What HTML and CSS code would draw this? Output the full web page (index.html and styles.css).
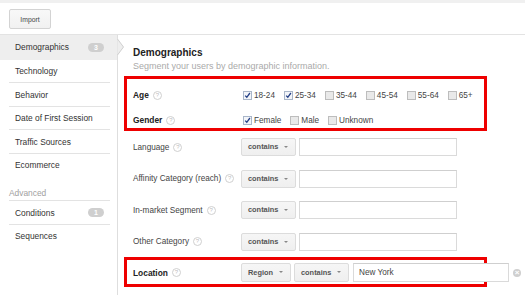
FILE: index.html
```html
<!DOCTYPE html>
<html lang="en">
<head>
    <meta charset="UTF-8">
    <meta name="viewport" content="width=device-width, initial-scale=1.0">
    <title>Segment Builder</title>
    <link rel="stylesheet" href="styles.css">
</head>
<body>
    <div class="top">
        <button type="button" class="btn-import">Import</button>
    </div>
    <div class="layout">
        <nav class="sidebar">
            <div class="nav-item active">
                <div class="nav-inner">Demographics <span class="badge">3</span></div>
                <svg class="nav-arrow" width="7" height="16" viewBox="0 0 7 16"><path d="M0.5 0 L6.5 8 L0.5 16" fill="#eeeeee" stroke="#cfcfcf" stroke-width="1"/></svg>
            </div>
            <div class="nav-item"><div class="nav-inner">Technology</div></div>
            <div class="nav-item"><div class="nav-inner">Behavior</div></div>
            <div class="nav-item"><div class="nav-inner">Date of First Session</div></div>
            <div class="nav-item"><div class="nav-inner">Traffic Sources</div></div>
            <div class="nav-item last"><div class="nav-inner">Ecommerce</div></div>
            <div class="nav-group">Advanced</div>
            <div class="nav-item"><div class="nav-inner">Conditions <span class="badge">1</span></div></div>
            <div class="nav-item last"><div class="nav-inner">Sequences</div></div>
        </nav>

        <main class="content">
            <h1>Demographics</h1>
            <p class="sub">Segment your users by demographic information.</p>

            <div class="highlight">
                <div class="row">
                    <div class="label strong">Age <span class="help">?</span></div>
                    <div class="checks">
                        <label class="check"><span class="cb on"></span>18-24</label>
                        <label class="check"><span class="cb on"></span>25-34</label>
                        <label class="check"><span class="cb"></span>35-44</label>
                        <label class="check"><span class="cb"></span>45-54</label>
                        <label class="check"><span class="cb"></span>55-64</label>
                        <label class="check"><span class="cb"></span>65+</label>
                    </div>
                </div>
                <div class="row">
                    <div class="label strong">Gender <span class="help">?</span></div>
                    <div class="checks">
                        <label class="check"><span class="cb on"></span>Female</label>
                        <label class="check"><span class="cb"></span>Male</label>
                        <label class="check"><span class="cb"></span>Unknown</label>
                    </div>
                </div>
            </div>

            <div class="fields">
                <div class="field">
                    <div class="label">Language <span class="help">?</span></div>
                    <div class="select">contains</div>
                    <div class="input"></div>
                </div>
                <div class="field">
                    <div class="label">Affinity Category (reach) <span class="help">?</span></div>
                    <div class="select">contains</div>
                    <div class="input"></div>
                </div>
                <div class="field">
                    <div class="label">In-market Segment <span class="help">?</span></div>
                    <div class="select">contains</div>
                    <div class="input"></div>
                </div>
                <div class="field">
                    <div class="label">Other Category <span class="help">?</span></div>
                    <div class="select">contains</div>
                    <div class="input"></div>
                </div>
            </div>

            <div class="highlight location">
                <div class="field">
                    <div class="label strong">Location <span class="help">?</span></div>
                    <div class="select narrow">Region</div>
                    <div class="select">contains</div>
                    <div class="input wide">New York</div>
                    <span class="clear">&times;</span>
                </div>
            </div>
        </main>
    </div>
</body>
</html>
```

FILE: styles.css
```css
body {
    margin: 0;
    font-family: "Liberation Sans", Arial, sans-serif;
    font-size: 8.4px;
    color: #333;
    background: #fff;
    overflow: hidden;
}
.top {
    border-top: 3px solid #f0f0f0;
    border-bottom: 1px solid #e3e3e3;
    padding: 6px 9px 5px;
    height: 20px;
}
.btn-import {
    width: 42px;
    height: 20px;
    padding: 0;
    font-family: inherit;
    font-size: 6.8px;
    color: #444;
    background: linear-gradient(#f8f8f8, #f1f1f1);
    border: 1px solid #d3d3d3;
    border-radius: 2px;
}
.layout {
    display: flex;
    height: 260px;
}
.sidebar {
    width: 117px;
    padding-top: 1px;
    border-right: 1px solid #dedede;
    flex-shrink: 0;
}
.nav-item {
    position: relative;
    height: 23.5px;
}
.nav-item.active {
    background: #eeeeee;
    margin-top: -1px;
    height: 24.5px;
}
.nav-inner {
    display: flex;
    align-items: center;
    height: 100%;
    box-sizing: border-box;
    margin: 0 7px 0 9px;
    padding: 1px 6px 0;
    border-bottom: 1px solid #e3e3e3;
}
.nav-item.active .nav-inner,
.nav-item.last .nav-inner {
    border-bottom-color: transparent;
}
.nav-arrow {
    position: absolute;
    right: -7px;
    top: 4px;
}
.badge {
    margin-left: auto;
    width: 16px;
    height: 9px;
    border-radius: 5px;
    background: #cfcfcf;
    color: #fff;
    font-size: 7px;
    font-weight: bold;
    line-height: 9px;
    text-align: center;
}
.nav-group {
    margin: 0 7px 0 9px;
    padding-top: 11px;
    padding-bottom: 2px;
    line-height: 10px;
    border-bottom: 1px solid #e3e3e3;
    color: #a0a0a0;
}
.content {
    padding: 11px 0 0 15px;
    flex: 1;
}
h1 {
    margin: 0;
    font-size: 10px;
    line-height: 14px;
    color: #222;
}
.sub {
    margin: 0;
    font-size: 9px;
    line-height: 12px;
    color: #aaa;
}
.highlight {
    width: 363px;
    box-sizing: border-box;
    margin: 4px 0 0 -9px;
    border: 3px solid #ee0000;
    padding: 8px 0 0 6px;
    display: flex;
    flex-direction: column;
    gap: 9px;
}
.row {
    display: flex;
    align-items: center;
    height: 16px;
}
.label {
    width: 108px;
    flex-shrink: 0;
    display: flex;
    align-items: center;
    font-size: 8.2px;
    color: #444;
}
.label.strong {
    font-size: 8.4px;
    font-weight: bold;
    color: #222;
}
.help {
    display: inline-block;
    width: 9px;
    height: 9px;
    box-sizing: border-box;
    margin-left: 4px;
    border: 1px solid #d0d0d0;
    border-radius: 50%;
    color: #c0c0c0;
    font-size: 6px;
    font-weight: normal;
    line-height: 7px;
    text-align: center;
}
.checks {
    display: flex;
    align-items: center;
    margin-left: 2px;
}
.check {
    display: flex;
    align-items: center;
    margin-right: 9px;
    font-size: 8.2px;
    color: #444;
}
.cb {
    width: 9px;
    height: 9px;
    box-sizing: border-box;
    margin-right: 2px;
    border: 1px solid #bdbdbd;
    background: #e9e9e9;
}
.cb.on {
    border-color: #a9b6c9;
    background: #f3f5f9 url("data:image/svg+xml,%3Csvg xmlns='http://www.w3.org/2000/svg' width='7' height='7' viewBox='0 0 7 7'%3E%3Cpath d='M1.2 3.6 L2.8 5.3 L5.9 1' fill='none' stroke='%23233f86' stroke-width='1.3'/%3E%3C/svg%3E") center no-repeat;
}
.fields {
    display: flex;
    flex-direction: column;
    gap: 13.5px;
    margin-top: 7px;
}
.field {
    display: flex;
    align-items: center;
    height: 18px;
}
.select {
    position: relative;
    width: 55px;
    height: 18px;
    flex-shrink: 0;
    box-sizing: border-box;
    padding-left: 6px;
    border: 1px solid #dcdcdc;
    border-radius: 2px;
    background: linear-gradient(#f6f6f6, #efefef);
    font-size: 7.4px;
    font-weight: bold;
    color: #555;
    line-height: 16px;
}
.select::after {
    content: "";
    position: absolute;
    right: 7px;
    top: 7px;
    border-left: 2px solid transparent;
    border-right: 2px solid transparent;
    border-top: 2px solid #888;
}
.select.narrow {
    width: 50px;
}
.input {
    width: 158px;
    height: 18px;
    flex-shrink: 0;
    box-sizing: border-box;
    margin-left: 3px;
    border: 1px solid #dadada;
    border-top-color: #cfcfcf;
    background: #fff;
    padding-left: 5px;
    font-size: 8.2px;
    line-height: 16px;
    color: #444;
}
.location {
    margin-top: 6.5px;
    padding: 3px 0 2px 6px;
}
.location .field {
    height: 19px;
}
.location .select,
.location .input {
    height: 19px;
    line-height: 17px;
}
.location .select + .select {
    margin-left: 3px;
}
.input.wide {
    width: 156px;
    margin-left: 4px;
}
.clear {
    flex-shrink: 0;
    width: 8px;
    height: 8px;
    margin-left: 4px;
    border-radius: 50%;
    background: #cfcfcf;
    color: #fff;
    font-size: 8px;
    font-weight: bold;
    line-height: 8px;
    text-align: center;
}
```
